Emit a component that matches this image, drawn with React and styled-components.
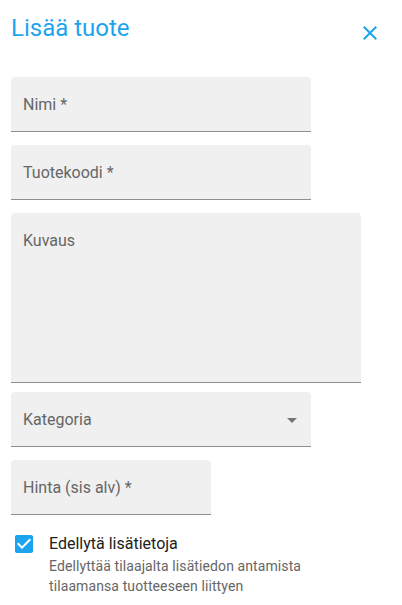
import styled, { createGlobalStyle } from "styled-components";

const GlobalStyle = createGlobalStyle`
  body {
    margin: 0;
    background: #ffffff;
    font-family: Roboto, "Liberation Sans", Arial, sans-serif;
  }
  * {
    box-sizing: border-box;
  }
`;

const Page = styled.div`
  width: 402px;
  padding: 12px 20px 0 11px;
`;

const Header = styled.div`
  display: flex;
  justify-content: space-between;
  align-items: flex-start;
  height: 32px;
`;

const Title = styled.h2`
  margin: 0;
  font-size: 24px;
  line-height: 32px;
  font-weight: 400;
  color: #1ea4ef;
`;

const CloseButton = styled.button`
  margin-top: 9px;
  padding: 0;
  border: none;
  background: none;
  width: 24px;
  height: 24px;
  display: flex;
  cursor: pointer;
`;

const Form = styled.div`
  display: flex;
  flex-direction: column;
  margin-top: 33px;
`;

const Field = styled.div`
  width: ${(p) => p.$width}px;
  height: ${(p) => p.$height || 55}px;
  margin-bottom: ${(p) => p.$gap ?? 13}px;
  background: #f0f0f0;
  border-radius: 4px 4px 0 0;
  border-bottom: 1px solid #8f8f8f;
  padding: 16px 7px 0 12px;
  display: flex;
  justify-content: space-between;
  align-items: flex-start;
`;

const Label = styled.span`
  font-size: 16px;
  line-height: 23px;
  color: #666666;
`;

const CheckRow = styled.div`
  display: flex;
  align-items: flex-start;
  margin-top: 4px;
  margin-left: 1px;
`;

const CheckIcon = styled.svg`
  width: 24px;
  height: 24px;
  flex-shrink: 0;
`;

const CheckText = styled.div`
  margin-left: 13px;
  display: flex;
  flex-direction: column;
`;

const CheckLabel = styled.span`
  font-size: 16px;
  line-height: 24px;
  color: #212121;
`;

const CheckHelp = styled.span`
  font-size: 14px;
  line-height: 20px;
  color: #666666;
  letter-spacing: 0.1px;
  width: 270px;
`;

const fields = [
  { label: "Nimi *", width: 300 },
  { label: "Tuotekoodi *", width: 300 },
  { label: "Kuvaus", width: 350, height: 170, gap: 9 },
  { label: "Kategoria", width: 300, select: true },
  { label: "Hinta (sis alv) *", width: 200 },
];

const App = () => {
  return (
    <Page>
      <GlobalStyle />
      <Header>
        <Title>Lisää tuote</Title>
        <CloseButton aria-label="Sulje">
          <svg width="24" height="24" viewBox="0 0 24 24" fill="#1ea4ef">
            <path d="M19 6.41L17.59 5 12 10.59 6.41 5 5 6.41 10.59 12 5 17.59 6.41 19 12 13.41 17.59 19 19 17.59 13.41 12z" />
          </svg>
        </CloseButton>
      </Header>
      <Form>
        {fields.map((f) => (
          <Field key={f.label} $width={f.width} $height={f.height} $gap={f.gap}>
            <Label>{f.label}</Label>
            {f.select && (
              <svg width="24" height="24" viewBox="0 0 24 24" fill="#757575">
                <path d="M7 10l5 5 5-5z" />
              </svg>
            )}
          </Field>
        ))}
        <CheckRow>
          <CheckIcon viewBox="0 0 24 24" fill="#1ea4ef">
            <path d="M19 3H5c-1.11 0-2 .9-2 2v14c0 1.1.89 2 2 2h14c1.11 0 2-.9 2-2V5c0-1.1-.89-2-2-2zm-9 14l-5-5 1.41-1.41L10 14.17l7.59-7.59L19 8l-9 9z" />
          </CheckIcon>
          <CheckText>
            <CheckLabel>Edellytä lisätietoja</CheckLabel>
            <CheckHelp>
              Edellyttää tilaajalta lisätiedon antamista tilaamansa tuotteeseen
              liittyen
            </CheckHelp>
          </CheckText>
        </CheckRow>
      </Form>
    </Page>
  );
};

export default App;
